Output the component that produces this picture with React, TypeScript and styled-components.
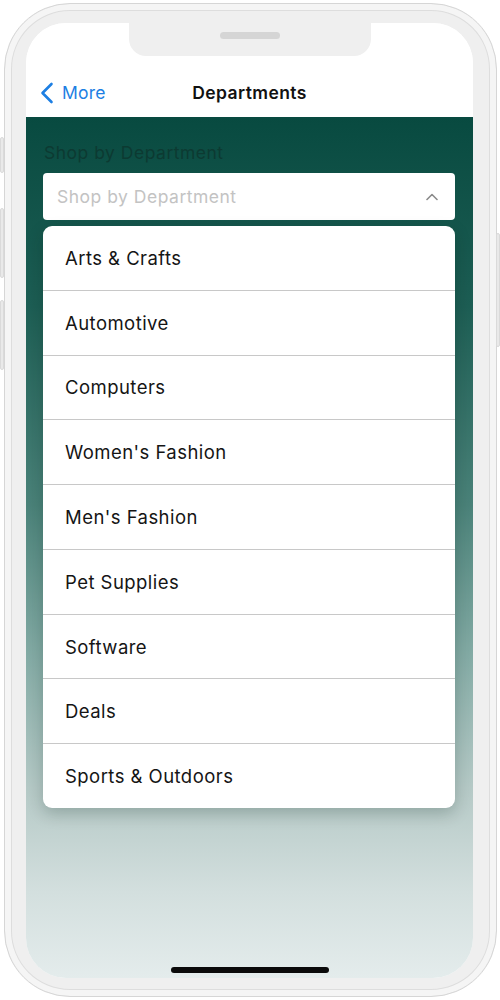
import styled, { createGlobalStyle } from 'styled-components';

const GlobalStyle = createGlobalStyle`
  html, body {
    margin: 0;
    padding: 0;
    background: #ffffff;
  }
  * {
    box-sizing: border-box;
  }
`;

const departments = [
  'Arts & Crafts',
  'Automotive',
  'Computers',
  "Women's Fashion",
  "Men's Fashion",
  'Pet Supplies',
  'Software',
  'Deals',
  'Sports & Outdoors',
];

const Stage = styled.div`
  width: 500px;
  height: 1000px;
  padding: 3px 3px 3px 4px;
  display: flex;
`;

const Frame = styled.div`
  position: relative;
  flex: 1;
  display: flex;
  padding: 19px 23px 18px 21px;
  border-radius: 66px;
  background: #efefef;
  border: 1px solid #d6d6d6;
  box-shadow: inset 0 0 0 6px #f5f5f5, inset 0 0 0 7px #dddddd;
`;

const SideButton = styled.div<{ $side: 'left' | 'right'; $top: number; $height: number }>`
  position: absolute;
  top: ${(p) => p.$top}px;
  ${(p) => (p.$side === 'left' ? 'left: -5px;' : 'right: -4px;')}
  width: 4px;
  height: ${(p) => p.$height}px;
  background: #e9e9e9;
  border: 1px solid #dadada;
  border-radius: 2px;
`;

const Screen = styled.div`
  position: relative;
  flex: 1;
  display: flex;
  flex-direction: column;
  border-radius: 40px;
  overflow: hidden;
  background: #ffffff;
`;

const TopBar = styled.div`
  display: flex;
  flex-direction: column;
  background: #ffffff;
`;

const NotchRow = styled.div`
  display: flex;
  justify-content: center;
`;

const Notch = styled.div`
  width: 242px;
  height: 33px;
  background: #efefef;
  border-radius: 0 0 17px 17px;
  display: flex;
  justify-content: center;
  padding-top: 9px;
`;

const Speaker = styled.div`
  width: 60px;
  height: 7px;
  border-radius: 4px;
  background: #d5d5d5;
`;

const NavBar = styled.div`
  height: 61px;
  display: grid;
  grid-template-columns: 1fr auto 1fr;
  align-items: center;
  padding: 12px 14px 0 14px;
  font-family: Inter, "Liberation Sans", sans-serif;
`;

const BackButton = styled.div`
  display: flex;
  align-items: center;
  gap: 8px;
  color: #1d7fe3;
  font-size: 17.5px;
  letter-spacing: 0.2px;
`;

const Title = styled.div`
  font-size: 17.5px;
  font-weight: 600;
  letter-spacing: 0.4px;
  color: #111111;
`;

const Content = styled.div`
  flex: 1;
  display: flex;
  flex-direction: column;
  padding: 25px 18px 0 17px;
  background: linear-gradient(
    180deg,
    #084a40 0%,
    #1d5e54 22%,
    #4a8279 45%,
    #85aca6 63%,
    #b5c9c6 78%,
    #d3dfde 90%,
    #e4ecec 100%
  );
  font-family: Inter, "Liberation Sans", sans-serif;
`;

const FieldLabel = styled.div`
  font-size: 17.5px;
  letter-spacing: 0.5px;
  color: #0c3a32;
  line-height: 22px;
  margin-left: 1px;
`;

const SelectBox = styled.div`
  margin-top: 9px;
  height: 47px;
  background: #ffffff;
  border-radius: 4px;
  display: flex;
  align-items: center;
  justify-content: space-between;
  padding: 0 17px 0 14px;
  font-size: 17.5px;
  letter-spacing: 0.5px;
  color: #c3c3c3;
`;

const Menu = styled.div`
  margin-top: 6px;
  height: 582px;
  background: #ffffff;
  border-radius: 9px;
  display: flex;
  flex-direction: column;
  box-shadow: 0 6px 16px rgba(0, 30, 25, 0.22);
  overflow: hidden;
`;

const MenuItem = styled.div`
  flex: 1;
  display: flex;
  align-items: center;
  padding-left: 22px;
  font-size: 18.5px;
  letter-spacing: 0.45px;
  color: #151515;
  border-top: 1px solid #c8c8c8;

  &:first-child {
    border-top: none;
  }
`;

const HomeIndicator = styled.div`
  position: absolute;
  left: 50%;
  bottom: 5px;
  transform: translateX(-50%);
  width: 158px;
  height: 6px;
  border-radius: 3px;
  background: #0a0a0a;
`;

const BackChevron = () => (
  <svg width="14" height="22" viewBox="0 0 14 22" fill="none">
    <path d="M11.5 2 L2.5 11 L11.5 20" stroke="#1d7fe3" strokeWidth="2.6" strokeLinecap="round" strokeLinejoin="round" />
  </svg>
);

const UpChevron = () => (
  <svg width="12" height="8" viewBox="0 0 12 8" fill="none">
    <path d="M1 6.5 L6 1.5 L11 6.5" stroke="#8a8a8a" strokeWidth="1.6" strokeLinecap="round" strokeLinejoin="round" />
  </svg>
);

const App = () => (
  <>
    <GlobalStyle />
    <Stage>
      <Frame>
        <SideButton $side="left" $top={133} $height={36} />
        <SideButton $side="left" $top={204} $height={70} />
        <SideButton $side="left" $top={296} $height={70} />
        <SideButton $side="right" $top={229} $height={114} />
        <Screen>
          <TopBar>
            <NotchRow>
              <Notch>
                <Speaker />
              </Notch>
            </NotchRow>
            <NavBar>
              <BackButton>
                <BackChevron />
                More
              </BackButton>
              <Title>Departments</Title>
              <div />
            </NavBar>
          </TopBar>
          <Content>
            <FieldLabel>Shop by Department</FieldLabel>
            <SelectBox>
              Shop by Department
              <UpChevron />
            </SelectBox>
            <Menu>
              {departments.map((name) => (
                <MenuItem key={name}>{name}</MenuItem>
              ))}
            </Menu>
          </Content>
          <HomeIndicator />
        </Screen>
      </Frame>
    </Stage>
  </>
);

export default App;
